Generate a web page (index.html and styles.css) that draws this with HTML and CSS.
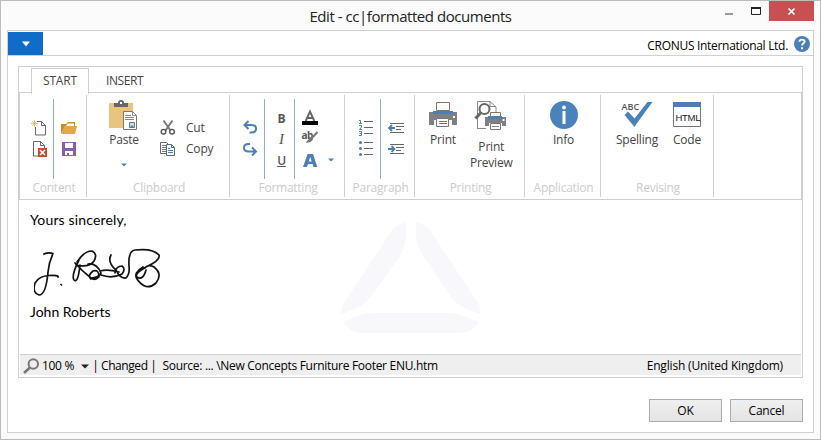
FILE: index.html
```html
<!DOCTYPE html>
<html lang="en">
<head>
<meta charset="utf-8">
<title>Edit - cc|formatted documents</title>
<link rel="stylesheet" href="styles.css">
</head>
<body>
<div class="window">
  <header class="titlebar">
    <h1 class="title">Edit - cc|formatted documents</h1>
    <div class="controls">
      <svg width="36" height="20" viewBox="722 1 36 20"><path d="M725 13h8v2h-8z" fill="#999"/><path d="M751.500 8.500h9v6h-9z" fill="none" stroke="#222"/><path d="M751 7h10v2h-10z" fill="#222"/></svg>
      <button class="close"><svg width="45" height="20" viewBox="769 1 45 20"><path d="M788.500 8.500l6 6m0-6l-6 6" stroke="#fff" stroke-width="1.700"/></svg></button>
    </div>
  </header>
  <main class="client">
    <div class="appbar">
      <button class="appmenu"><svg width="10" height="6" viewBox="0 0 10 6"><path d="M1 .5h8L5 5.500z" fill="#fff"/></svg></button>
      <span class="company">CRONUS International Ltd.</span>
      <svg class="help" width="16" height="16" viewBox="0 0 16 16"><circle cx="8" cy="8" r="8" fill="#4a7fb9"/><path d="M5.400 5.800C5.500 2.900 10.700 2.900 10.600 5.700C10.500 7.300 8 7.500 8 9.600" fill="none" stroke="#fff" stroke-width="1.900"/><path d="M7 11.200h2v2H7z" fill="#fff"/></svg>
    </div>
    <section class="editor">
      <nav class="tabs"><span class="tab active">START</span><span class="tab">INSERT</span></nav>
      <div class="ribbon">
        <div class="group content">
          <div class="tools">
            <div class="stack">
              <svg width="20" height="20" viewBox="30 118 20 20"><path d="M37 121.500h4.500l4 4v9.500H35.500V127M41.500 121.500v4h4" fill="none" stroke="#666"/><path d="M34.500 120v7M31 123.500h7M32.200 121.200l4.600 4.600m0-4.600l-4.600 4.600" stroke="#e7b05c" stroke-width=".8"/></svg>
              <svg width="20" height="20" viewBox="30 140 20 20"><path d="M33.500 141.500h7l4 4V156h-11zM40.500 141.500v4h4" fill="none" stroke="#666"/><path d="M38 148h9v9h-9z" fill="#cf4627"/><path d="M40 150l5 5m0-5l-5 5" stroke="#fff" stroke-width="1.600"/></svg>
            </div>
            <i class="rule"></i>
            <div class="stack">
              <svg width="20" height="20" viewBox="59 118 20 20"><path d="M61 134v-10h5l2-2h7v4H65z" fill="#c88b2e"/><path d="M64.500 126H77l-2 8H61.300z" fill="#e0a647"/><path d="M67.500 123.500h6.500V126h-8z" fill="#fff"/></svg>
              <svg width="20" height="20" viewBox="59 140 20 20"><path d="M62 142h14v14H62z" fill="#885ead"/><path d="M65 143h8v5h-8zM65 151h8v4h-4v-2h-2v2h-2z" fill="#fff"/></svg>
            </div>
          </div>
          <div class="caption">Content</div>
        </div>
        <div class="group clipboard">
          <div class="tools">
            <button class="big paste">
              <svg width="30" height="32" viewBox="110 99 30 32"><path d="M110 103h24v25h-24z" fill="#eac47e"/><path d="M115 107v-4h4q0-3 3-3t3 3h4v4z" fill="#666"/><path d="M121 102h2v2h-2z" fill="#fff"/><path d="M124.500 111.500h9l4 4v14h-13z" fill="#fff" stroke="#777"/><path d="M133.500 111.500v4h4M126 115.500h6M126 117.500h9M126 119.500h9" stroke="#888" fill="none"/><path d="M130.500 122.500h5v5h-5z" fill="#e9dfae" stroke="#4a7fb9"/><path d="M131 127l2-2 2 2z" fill="#4a7fb9"/></svg>
              <span>Paste</span>
              <svg class="drop" width="6" height="4" viewBox="0 0 6 4"><path d="M0 .5h6L3 3.500z" fill="#4a7fb9"/></svg>
            </button>
            <div class="rows">
              <button class="row"><svg width="20" height="20" viewBox="158 118 20 20"><path d="M163.500 120.500l7 10M172.500 120.500l-7 10" stroke="#777" stroke-width="2"/><circle cx="163.500" cy="131.700" r="2.300" fill="none" stroke="#555" stroke-width="1.400"/><circle cx="172" cy="131.700" r="2.300" fill="none" stroke="#555" stroke-width="1.400"/></svg><span>Cut</span></button>
              <button class="row"><svg width="20" height="20" viewBox="158 139 20 20"><path d="M160.500 142.500h6l2 2v9h-8z" fill="#fff" stroke="#666"/><path d="M162 145.500h4M162 147.500h4M162 149.500h4M162 151.500h4" stroke="#4a7fb9"/><path d="M166.500 144.500h5l3 3v8h-8zM171.500 144.500v3h3" fill="#fff" stroke="#666"/><path d="M168 148.500h2M168 150.500h5M168 152.500h5" stroke="#4a7fb9"/></svg><span>Copy</span></button>
            </div>
          </div>
          <div class="caption">Clipboard</div>
        </div>
        <div class="group formatting">
          <div class="tools">
            <div class="stack">
              <svg width="20" height="20" viewBox="240 118 20 20"><path d="M245 125h6.500c6 0 6 7.500 0 7.500h-2M248.500 121l-4 4 4 4" fill="none" stroke="#4a7fb9" stroke-width="2"/></svg>
              <svg width="20" height="20" viewBox="240 140 20 20"><path d="M250 144h-1.500c-6 0-6 7.500 0 7.500h7.500M252 147.500l4 4-4 4" fill="none" stroke="#4a7fb9" stroke-width="2"/></svg>
            </div>
            <i class="rule"></i>
            <div class="letters"><b>B</b><em>I</em><u>U</u></div>
            <i class="rule"></i>
            <div class="styles">
              <svg width="18" height="17" viewBox="301 109 18 17"><path d="M305.700 121l4.300-9.500 4.300 9.500M307 118h6" fill="none" stroke="#666" stroke-width="1.900"/><path d="M302 121h16v4h-16z" fill="#000"/></svg>
              <svg class="brush" width="18" height="16" viewBox="301 129 18 16"><text x="301.500" y="138.500" class="ab">ab</text><path d="M317.500 132l-7 7.500" stroke="#777" stroke-width="2"/><path d="M311.500 138q-3 0-5.500 5 5.500-.5 7-3.500z" fill="#777"/></svg>
              <svg class="fontcolor" width="18" height="18" viewBox="301 151 18 18"><path d="M303 167h4l1-3h4.500l1 3h3.800l-4.300-13h-5.400zM308.700 161.500l1.500-4.500 1.500 4.500z" fill="#4a7fb9" fill-rule="evenodd"/></svg>
            </div>
            <svg class="drop" width="6" height="4" viewBox="0 0 6 4"><path d="M0 .5h6L3 3.500z" fill="#4a7fb9"/></svg>
          </div>
          <div class="caption">Formatting</div>
        </div>
        <div class="group paragraph">
          <div class="tools">
            <div class="stack">
              <svg width="18" height="20" viewBox="357 118 18 20"><path d="M364 121.500h9M364 127.500h9M364 133.500h9" stroke="#666"/><path d="M359 120.500h1.500v3.500M359 123.500h3M359 125.500h2.500v1.500l-2 2.500h2.500M359 131.500h2.500v4H359M359.500 133.500h2" fill="none" stroke="#4a7fb9"/></svg>
              <svg width="18" height="20" viewBox="357 140 18 20"><path d="M364 142.500h9M364 148.500h9M364 154.500h9" stroke="#666"/><g fill="#4a7fb9"><circle cx="360.500" cy="142.500" r="1.500"/><circle cx="360.500" cy="148.500" r="1.500"/><circle cx="360.500" cy="154.500" r="1.500"/></g></svg>
            </div>
            <i class="rule"></i>
            <div class="stack">
              <svg width="20" height="20" viewBox="386 118 20 20"><path d="M390 123.500h14M396 126.500h8M396 129.500h5M390 132.500h14" stroke="#666"/><path d="M395 128h-5M392 125l-3 3 3 3" fill="none" stroke="#4a7fb9" stroke-width="1.800"/></svg>
              <svg width="20" height="20" viewBox="386 140 20 20"><path d="M390 144.500h14M396 147.500h8M396 150.500h5M390 153.500h14" stroke="#666"/><path d="M388 149h6M391.500 146l3 3-3 3" fill="none" stroke="#4a7fb9" stroke-width="1.800"/></svg>
            </div>
          </div>
          <div class="caption">Paragraph</div>
        </div>
        <div class="group printing">
          <div class="tools">
            <button class="big"><svg width="30" height="32" viewBox="428 99 30 32"><path d="M429 112h4v2h20v-2h4v13h-5v-5h-18v5h-5z" fill="#808080"/><path d="M433 111h20v3h-20z" fill="#4a7fb9"/><path d="M436.500 102.500h13v8h-13z" fill="#fff" stroke="#777"/><path d="M436.500 118.500h12v8h-12z" fill="#fff" stroke="#777"/><path d="M439 121.500h8M439 123.500h8" stroke="#4a7fb9"/><path d="M453 116h2v2h-2z" fill="#fff"/></svg><span>Print</span></button>
            <button class="big preview"><svg width="34" height="32" viewBox="476 99 34 32"><path d="M479.500 129V101.500H492L498 107v6M479 128.500h9M492 101.500v5h6" fill="none" stroke="#888"/><circle cx="486.500" cy="109" r="5" fill="#fff" stroke="#666" stroke-width="2"/><path d="M483 112.500l-5.500 6" stroke="#666" stroke-width="3"/><path d="M487 117h21v9h-4v-3h-13v3h-4z" fill="#808080"/><path d="M490 116h14v3h-14z" fill="#4a7fb9"/><path d="M492.500 112.500h10v4h-10zM492.500 123.500h10v6h-10z" fill="#fff" stroke="#777"/><path d="M494 126.500h7" stroke="#888"/><path d="M504.500 119h2v2h-2z" fill="#fff"/></svg><span>Print<br>Preview</span></button>
          </div>
          <div class="caption">Printing</div>
        </div>
        <div class="group application">
          <div class="tools">
            <button class="big"><svg width="30" height="32" viewBox="549 99 30 32"><circle cx="564" cy="115" r="14" fill="#4a82bb"/><path d="M562.500 111h3v13h-3z" fill="#fff"/><circle cx="564" cy="107.500" r="1.900" fill="#fff"/></svg><span>Info</span></button>
          </div>
          <div class="caption">Application</div>
        </div>
        <div class="group revising">
          <div class="tools">
            <button class="big"><svg width="32" height="32" viewBox="621 99 32 32"><path d="M624.500 115l3.500-3.500 6.500 7L647.500 102h5l-16.500 22.500-1.500 2.500z" fill="#4a82bb"/><text x="621.500" y="110" class="abc">ABC</text></svg><span>Spelling</span></button>
            <button class="big code"><svg width="30" height="32" viewBox="672 99 30 32"><path d="M673.500 102.500h27v24h-27z" fill="#fff" stroke="#777"/><path d="M673 102h28v5h-28z" fill="#4a7fb9"/><text x="675.500" y="120.500" class="html">HTML</text></svg><span>Code</span></button>
          </div>
          <div class="caption">Revising</div>
        </div>
      </div>
      <article class="document">
        <svg class="watermark" width="142" height="112" viewBox="340 222 142 112" fill="#f7f7fc"><path d="M406 222.700V237Q405 249 399 257L371 297Q362 308 341.500 314Q341 308 346 300L393 229Q397 224 406 222.700zM416 222.700V237Q417 246 424 257L451 297Q459 308 480.500 314Q481 307 476 300L429 229Q425 224 416 222.700zM343.500 322Q361 313 372 313H449Q458 313 479 322Q473 333 458 333H362Q349 332 343.500 322z"/></svg>
        <p>Yours sincerely,</p>
        <svg class="signature" width="130" height="50" viewBox="34 248 130 50"><path d="M44 254Q48 252 53 253.500Q49 262 48 272Q46 295 39 295Q32 293 35 283Q39 276 49 275.500T58 277M61 284.500l.5 .5M77 262Q84 251 92 251Q98 254 94 261Q89 268 76 265M79 260Q71 276 74 280Q78 284 80 265M75 263Q82 271 91 278Q95 281 99 277Q99 269 93 271Q87 276 91 279M88 264Q97 263 101 273Q98 278 91 278M100 271Q108 269 119 272M101 275Q112 279 122 274Q126 269 122 266Q116 266 115 273M111 255Q107 262 116 270Q120 279 126 278Q130 274 129 266Q128 251 135 250Q153 248 159 255Q161 260 146 267Q134 274 137 277Q143 281 146 270M143 267Q133 273 137 279Q146 292 156 283Q163 274 154 267Q148 264 145 268" fill="none" stroke="#111" stroke-width="1.700" stroke-linecap="round" stroke-linejoin="round"/></svg>
        <p class="name">John Roberts</p>
      </article>
      <footer class="status">
        <svg width="18" height="18" viewBox="23 357 18 18"><circle cx="33.300" cy="364" r="4.700" fill="none" stroke="#777" stroke-width="2"/><path d="M30 367.500l-6 5.500" stroke="#777" stroke-width="2.600"/></svg>
        <span class="zoom">100 %</span>
        <svg class="arrow" width="8" height="5" viewBox="0 0 8 5"><path d="M0 .5h8L4 4.500z" fill="#222"/></svg>
        <span class="state">| Changed |</span>
        <span class="source">Source: ... \New Concepts Furniture Footer ENU.htm</span>
        <span class="language">English (United Kingdom)</span>
      </footer>
    </section>
    <div class="actions"><button class="action">OK</button><button class="action">Cancel</button></div>
  </main>
</div>
</body>
</html>
```
FILE: styles.css
```css
* { box-sizing: border-box; }
body { margin: 0; font: 12px/16px "Open Sans", sans-serif; color: #000; }
svg { display: block; flex: none; }
button { border: 0; padding: 0; margin: 0; background: none; font: inherit; color: inherit; letter-spacing: inherit; }
.window { width: 821px; height: 440px; border: 1px solid #bcbcbc; background: #fbfbfb; padding: 0 6px 6px; }
.titlebar { height: 29px; display: grid; grid-template-columns: 1fr auto 1fr; }
.title { grid-column: 2; margin: 0; font-size: 15px; font-weight: 400; line-height: 30px; letter-spacing: -.45px; color: #222; white-space: nowrap; }
.controls { display: flex; justify-content: flex-end; align-items: flex-start; }
.controls > svg { margin-right: 11px; overflow: visible; }
.close { background: #c75050; width: 45px; height: 20px; }
.client { height: 403px; border: 1px solid #d0d0d0; background: #fff; }
.appbar { height: 25px; padding-top: 1px; border-bottom: 1px solid #d0d0d0; display: flex; align-items: center; }
.appmenu { width: 35px; height: 23px; background: #0f6dc8; display: grid; place-items: center; }
.company { margin-left: auto; letter-spacing: -.3px; padding-top: 4px; }
.help { margin: 1px 3px 0 6px; }
.editor { margin: 10px 10px 0; height: 312px; border: 1px solid #d0d0d0; display: flex; flex-direction: column; }
.tabs { height: 26px; padding: 1px 0 0 12px; display: flex; position: relative; z-index: 1; color: #444; letter-spacing: -.2px; }
.tab { padding: 4px 11px 0; width: 58px; height: 25px; border: 1px solid transparent; border-bottom: 0; white-space: nowrap; margin-right: 5px; }
.tab + .tab { letter-spacing: -.4px; }
.tab.active { height: 26px; border-color: #d0d0d0; background: #fff; }
.ribbon { height: 108px; margin: -1px 0 0; border: 1px solid #d0d0d0; padding-top: 2px; display: flex; color: #444; }
.group { height: 102px; border-right: 1px solid #d0d0d0; display: flex; flex-direction: column; letter-spacing: -.2px; }
.tools { height: 85px; display: flex; }
.caption { text-align: center; color: #ccc; line-height: 18px; padding-left: 2px; letter-spacing: -.25px; }
.content { width: 67px; }
.clipboard { width: 143px; }
.formatting { width: 115px; }
.paragraph { width: 70px; }
.printing { width: 110px; }
.application { width: 76px; }
.revising { width: 113px; }
.stack { display: flex; flex-direction: column; gap: 2px; padding-top: 23px; }
.rule { width: 1px; height: 80px; margin-top: 4px; background: #8eb0d8; }
.content .stack:first-child { margin: 0 3px 0 10px; }
.content .rule + .stack { margin-left: 5px; }
.formatting .stack { margin: 0 4px 0 10px; }
.paragraph .stack:first-child { margin: 0 5px 0 12px; }
.paragraph .rule + .stack { margin-left: 5px; }
.big { display: flex; flex-direction: column; align-items: center; padding-top: 4px; }
.big span { margin-top: 1px; }
.paste { width: 74px; }
.paste .drop { margin-top: 15px; }
.rows { display: flex; flex-direction: column; gap: 1px; padding-top: 23px; margin-left: -3px; }
.row { display: flex; align-items: center; gap: 8px; height: 20px; }
.letters { width: 31px; padding-left: 2px; margin-right: -2px; display: flex; flex-direction: column; align-items: center; padding-top: 13px; line-height: 21px; color: #555; }
.letters b, .letters u { font-size: 12px; font-weight: 600; }
.letters b { font-weight: 700; }
.letters em { font-family: "Liberation Serif", serif; font-size: 15px; }
.styles { padding: 14px 0 0 6px; }
.brush { margin-top: 3px; }
.fontcolor { margin-top: 6px; }
.ab { font: bold 10px "Open Sans", sans-serif; letter-spacing: -.6px; fill: #555; }
.formatting .drop { margin: 63px 0 0 9px; }
.printing .big { margin-left: 13px; }
.printing .preview { margin-left: 12px; }
.preview span { margin-top: 8px; }
.application .tools { justify-content: center; padding-left: 2px; }
.revising .big { width: 50px; }
.revising .big:first-child { margin-left: 11px; }
.abc { font: 600 9px "Open Sans", sans-serif; letter-spacing: .1px; fill: #555; }
.html { font: 9.5px "Liberation Sans", sans-serif; letter-spacing: -.3px; fill: #222; }
.document { flex: 1; position: relative; padding: 12px 11px; font: 14px/16px Lato, sans-serif; letter-spacing: .15px; }
.document p { margin: 0; position: relative; }
.watermark { position: absolute; left: 321px; top: 22px; }
.signature { margin: 20px 0 0 4px; }
.document .name { margin-top: 6px; letter-spacing: 0; }
.status { height: 21px; margin: 0 1px 2px; border-top: 1px solid #d0d0d0; background: #efefef; display: flex; align-items: center; padding: 2px 18px 0 3px; letter-spacing: -.3px; white-space: nowrap; }
.arrow { margin: 0 3px 0 7px; }
.zoom { margin-left: 1px; }
.state { letter-spacing: -.42px; }
.source { margin-left: 6px; }
.language { margin-left: auto; letter-spacing: -.17px; }
.actions { display: flex; justify-content: flex-end; gap: 8px; padding: 21px 10px 0; }
.action { width: 73px; height: 23px; border: 1px solid #acacac; background: linear-gradient(#f0f0f0, #e4e4e4); letter-spacing: -.2px; }
```
